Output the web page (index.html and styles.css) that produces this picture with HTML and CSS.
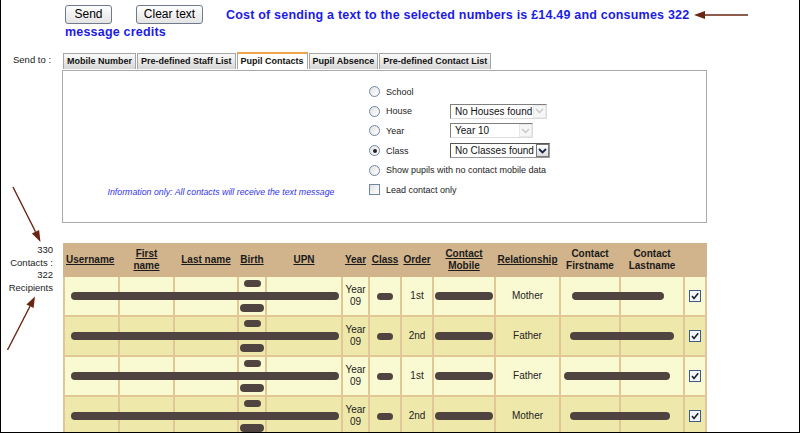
FILE: index.html
```html
<!DOCTYPE html>
<html lang="en">
<head>
    <meta charset="UTF-8">
    <meta name="viewport" content="width=device-width, initial-scale=1.0">
    <title>Send Text Message</title>
    <link rel="stylesheet" href="styles.css">
</head>
<body>
<div class="page">
    <div class="actions">
        <div class="action-row"><button class="btn btn-send">Send</button><button class="btn btn-clear">Clear text</button><span class="cost">Cost of sending a text to the selected numbers is £14.49 and consumes 322</span></div>
        <div class="cost cost-wrap">message credits</div>
    </div>

    <div class="send-to">
        <div class="send-label">Send to :</div>
        <div class="send-body">
            <ul class="tabs">
                <li class="tab">Mobile Number</li>
                <li class="tab">Pre-defined Staff List</li>
                <li class="tab active">Pupil Contacts</li>
                <li class="tab">Pupil Absence</li>
                <li class="tab">Pre-defined Contact List</li>
            </ul>
            <div class="panel">
                <p class="info">Information only: All contacts will receive the text message</p>
                <div class="options">
                    <div class="option"><span class="radio"></span><span class="opt-label">School</span></div>
                    <div class="option">
                        <span class="radio"></span><span class="opt-label">House</span>
                        <span class="select select-house disabled"><span>No Houses found</span><span class="arrow"><svg width="9" height="6" viewBox="0 0 9 6"><path d="M1 1 L4.5 4.5 L8 1" fill="none" stroke="#c8c8c8" stroke-width="1.4"/></svg></span></span>
                    </div>
                    <div class="option">
                        <span class="radio"></span><span class="opt-label">Year</span>
                        <span class="select select-year disabled"><span>Year 10</span><span class="arrow"><svg width="9" height="6" viewBox="0 0 9 6"><path d="M1 1 L4.5 4.5 L8 1" fill="none" stroke="#c8c8c8" stroke-width="1.4"/></svg></span></span>
                    </div>
                    <div class="option">
                        <span class="radio checked"></span><span class="opt-label">Class</span>
                        <span class="select select-class"><span>No Classes found</span><span class="arrow"><svg width="9" height="6" viewBox="0 0 9 6"><path d="M1 1 L4.5 4.5 L8 1" fill="none" stroke="#1a2a44" stroke-width="1.8"/></svg></span></span>
                    </div>
                    <div class="option"><span class="radio"></span><span class="opt-label wide">Show pupils with no contact mobile data</span></div>
                    <div class="option"><span class="box"></span><span class="opt-label wide">Lead contact only</span></div>
                </div>
            </div>
        </div>
    </div>

    <div class="results">
        <div class="counts">330<br>Contacts :<br>322<br>Recipients</div>
        <table class="contacts">
            <colgroup>
                <col class="c-user"><col class="c-first"><col class="c-last"><col class="c-birth">
                <col class="c-upn"><col class="c-year"><col class="c-class"><col class="c-order">
                <col class="c-mobile"><col class="c-rel"><col class="c-cfirst"><col class="c-clast"><col class="c-check">
            </colgroup>
            <thead>
                <tr>
                    <th class="left"><a href="#">Username</a></th>
                    <th><a href="#">First<br>name</a></th>
                    <th><a href="#">Last name</a></th>
                    <th><a href="#">Birth</a></th>
                    <th><a href="#">UPN</a></th>
                    <th><a href="#">Year</a></th>
                    <th><a href="#">Class</a></th>
                    <th><a href="#">Order</a></th>
                    <th><a href="#">Contact<br>Mobile</a></th>
                    <th><a href="#">Relationship</a></th>
                    <th>Contact<br>Firstname</th>
                    <th>Contact<br>Lastname</th>
                    <th></th>
                </tr>
            </thead>
            <tbody>
                <tr>
                    <td><span class="bar bar-name"></span></td>
                    <td></td><td></td>
                    <td><div class="dob"><span class="bar dob-top"></span><span class="bar dob-bottom"></span></div></td>
                    <td></td>
                    <td>Year<br>09</td>
                    <td><span class="bar bar-class"></span></td>
                    <td>1st</td>
                    <td><span class="bar bar-mobile"></span></td>
                    <td>Mother</td>
                    <td><span class="bar bar-contact"></span></td>
                    <td></td>
                    <td><svg class="tick" width="12" height="12" viewBox="0 0 12 12"><rect x="0.5" y="0.5" width="11" height="11" fill="#f4f6fa" stroke="#3c5a8a"/><path d="M3 6 L5 8.5 L9.2 3.2" fill="none" stroke="#1b2430" stroke-width="1.6"/></svg></td>
                </tr>
                <tr>
                    <td><span class="bar bar-name"></span></td>
                    <td></td><td></td>
                    <td><div class="dob"><span class="bar dob-top"></span><span class="bar dob-bottom"></span></div></td>
                    <td></td>
                    <td>Year<br>09</td>
                    <td><span class="bar bar-class"></span></td>
                    <td>2nd</td>
                    <td><span class="bar bar-mobile"></span></td>
                    <td>Father</td>
                    <td><span class="bar bar-contact long"></span></td>
                    <td></td>
                    <td><svg class="tick" width="12" height="12" viewBox="0 0 12 12"><rect x="0.5" y="0.5" width="11" height="11" fill="#f4f6fa" stroke="#3c5a8a"/><path d="M3 6 L5 8.5 L9.2 3.2" fill="none" stroke="#1b2430" stroke-width="1.6"/></svg></td>
                </tr>
                <tr>
                    <td><span class="bar bar-name"></span></td>
                    <td></td><td></td>
                    <td><div class="dob"><span class="bar dob-top"></span><span class="bar dob-bottom"></span></div></td>
                    <td></td>
                    <td>Year<br>09</td>
                    <td><span class="bar bar-class"></span></td>
                    <td>1st</td>
                    <td><span class="bar bar-mobile"></span></td>
                    <td>Father</td>
                    <td><span class="bar bar-contact early"></span></td>
                    <td></td>
                    <td><svg class="tick" width="12" height="12" viewBox="0 0 12 12"><rect x="0.5" y="0.5" width="11" height="11" fill="#f4f6fa" stroke="#3c5a8a"/><path d="M3 6 L5 8.5 L9.2 3.2" fill="none" stroke="#1b2430" stroke-width="1.6"/></svg></td>
                </tr>
                <tr>
                    <td><span class="bar bar-name"></span></td>
                    <td></td><td></td>
                    <td><div class="dob"><span class="bar dob-top"></span><span class="bar dob-bottom"></span></div></td>
                    <td></td>
                    <td>Year<br>09</td>
                    <td><span class="bar bar-class"></span></td>
                    <td>2nd</td>
                    <td><span class="bar bar-mobile"></span></td>
                    <td>Mother</td>
                    <td><span class="bar bar-contact mid"></span></td>
                    <td></td>
                    <td><svg class="tick" width="12" height="12" viewBox="0 0 12 12"><rect x="0.5" y="0.5" width="11" height="11" fill="#f4f6fa" stroke="#3c5a8a"/><path d="M3 6 L5 8.5 L9.2 3.2" fill="none" stroke="#1b2430" stroke-width="1.6"/></svg></td>
                </tr>
            </tbody>
        </table>
    </div>

    <!-- annotation arrows drawn over the screenshot -->
    <svg class="notes" width="800" height="433" viewBox="0 0 800 433">
        <g stroke="#6a2412" stroke-width="1.4" fill="#6a2412">
            <line x1="748" y1="15" x2="704" y2="15"/>
            <polygon points="694,15 705,11 705,19" stroke="none"/>
            <line x1="13" y1="187" x2="35.5" y2="231.7"/>
            <polygon points="40.5,242 31.9,233.5 39.1,229.9" stroke="none"/>
            <line x1="7.5" y1="350" x2="30" y2="306.3"/>
            <polygon points="35,296.5 33.6,308.1 26.4,304.5" stroke="none"/>
        </g>
    </svg>
</div>
</body>
</html>
```

FILE: styles.css
```css
body {
    margin: 0;
    background: #fff;
    font-family: "Liberation Sans", Arial, sans-serif;
    color: #222;
}

.page {
    position: relative;
    width: 800px;
    height: 433px;
    box-sizing: border-box;
    border: 1px solid #000;
    border-top: 0;
    overflow: hidden;
}

/* top bar */
.actions {
    padding: 5px 0 0 64px;
}
.action-row {
    display: flex;
    align-items: center;
    height: 19px;
}
.btn {
    box-sizing: border-box;
    height: 19px;
    padding: 0;
    font: 12px/17px "Liberation Sans", Arial, sans-serif;
    color: #000;
    background: linear-gradient(#fefefe, #e4e4e4);
    border: 1px solid #6f7b8c;
    border-radius: 3px;
}
.btn-send {
    width: 47px;
    margin-right: 24px;
}
.btn-clear {
    width: 67px;
    margin-right: 23px;
}
.cost {
    font-size: 12.5px;
    font-weight: bold;
    letter-spacing: 0.2px;
    color: #1c1ce6;
    white-space: nowrap;
}
.cost-wrap {
    line-height: 16px;
}

/* send to */
.send-to {
    display: flex;
    margin-top: 13px;
}
.send-label {
    width: 49px;
    padding-left: 12px;
    font-size: 9.5px;
    line-height: 14px;
    color: #222;
}
.tabs {
    display: flex;
    align-items: flex-end;
    gap: 1px;
    height: 16px;
    margin: 0 0 1px 1px;
    padding: 0;
    list-style: none;
}
.tab {
    height: 15px;
    line-height: 15px;
    padding: 0 3px;
    font-size: 9px;
    font-weight: bold;
    color: #111;
    background: linear-gradient(#fbfbfb, #d6d6d6);
    border: 1px solid #a5a5a5;
    border-bottom: 0;
}
.tab.active {
    background: #fff;
    border-top: 2px solid #efa54a;
}
.panel {
    display: grid;
    grid-template-columns: 306px auto;
    width: 643px;
    height: 151px;
    border: 1px solid #aaa;
}
.info {
    align-self: end;
    margin: 0 0 25px;
    padding-left: 10px;
    text-align: center;
    font-size: 8.8px;
    font-style: italic;
    color: #3434ea;
}
.options {
    padding-top: 11px;
}
.option {
    display: flex;
    align-items: center;
    height: 19.6px;
}
.radio,
.box {
    flex: none;
    width: 11px;
    height: 11px;
    box-sizing: border-box;
    border: 1px solid #6f87a6;
    background: linear-gradient(135deg, #e2e2e2, #fff);
}
.radio {
    border-radius: 50%;
    display: flex;
    align-items: center;
    justify-content: center;
}
.radio.checked::after {
    content: "";
    width: 4px;
    height: 4px;
    border-radius: 50%;
    background: #222;
}
.opt-label {
    width: 64px;
    margin-left: 6px;
    font-size: 9px;
    color: #222;
}
.opt-label.wide {
    width: auto;
}
.select {
    display: flex;
    align-items: center;
    justify-content: space-between;
    box-sizing: border-box;
    height: 15px;
    padding-left: 4px;
    font-size: 10px;
    color: #111;
    background: #fff;
    border: 1px solid;
    border-color: #808080 #dcdcdc #dcdcdc #808080;
}
.select .arrow {
    display: flex;
    align-items: center;
    justify-content: center;
    width: 13px;
    height: 13px;
    box-sizing: border-box;
    border: 1px solid #e8e8e8;
    background: #f6f6f6;
}
.select-house { width: 97px; }
.select-year { width: 83px; }
.select-class {
    width: 100px;
    border-color: #555 #999 #999 #555;
}
.select-class .arrow {
    border: 1px solid #777;
    background: linear-gradient(#fff, #dcdcdc);
}

/* results */
.results {
    display: flex;
    align-items: flex-start;
    margin-top: 20px;
}
.counts {
    width: 52px;
    margin-right: 10px;
    padding-top: 1px;
    text-align: right;
    font-size: 9.5px;
    line-height: 12.7px;
    color: #222;
}
.contacts {
    width: 642px;
    table-layout: fixed;
    border-collapse: collapse;
    font-size: 10px;
}
.c-user { width: 55px; }
.c-first { width: 55px; }
.c-last { width: 64px; }
.c-birth { width: 28px; }
.c-upn { width: 76px; }
.c-year { width: 27px; }
.c-class { width: 32px; }
.c-order { width: 32px; }
.c-mobile { width: 62px; }
.c-rel { width: 65px; }
.c-cfirst { width: 60px; }
.c-clast { width: 64px; }
.c-check { width: 22px; }

.contacts th {
    height: 30px;
    padding: 0;
    font-size: 10px;
    line-height: 12px;
    color: #1a1a1a;
    background: #d2b48c;
    border: 2px solid #d2b48c;
    text-align: center;
}
.contacts th.left {
    text-align: left;
    padding-left: 1px;
}
.contacts th a {
    color: #1a1a1a;
    text-decoration: underline;
}
.contacts td {
    height: 38px;
    padding: 0;
    text-align: center;
    line-height: 12px;
    color: #222;
    border: 2px solid #e2c796;
}
.contacts tbody tr:nth-child(odd) td { background: #fafad2; }
.contacts tbody tr:nth-child(even) td { background: #eee8aa; }

/* redacted values, painted over the neighbouring cells */
.bar {
    position: relative;
    z-index: 1;
    display: block;
    height: 8px;
    border-radius: 4px;
    background: #504440;
}
.bar-name {
    width: 268px;
    margin-left: 6px;
}
.dob {
    display: flex;
    flex-direction: column;
    align-items: center;
    justify-content: space-between;
    height: 32px;
}
.dob-top {
    width: 17px;
    height: 7px;
}
.dob-bottom {
    width: 24px;
}
.bar-class {
    width: 16px;
    height: 7px;
    margin: 0 auto;
}
.bar-mobile {
    width: 58px;
    margin-left: 1px;
}
.bar-contact {
    width: 92px;
    margin-left: 11px;
}
.bar-contact.long {
    width: 104px;
    margin-left: 9px;
}
.bar-contact.early {
    width: 106px;
    margin-left: 3px;
}
.bar-contact.mid {
    width: 100px;
    margin-left: 9px;
}
.tick {
    display: block;
    margin: 0 auto;
}

.notes {
    position: absolute;
    top: 0;
    left: -1px;
    z-index: 2;
    pointer-events: none;
}
```
